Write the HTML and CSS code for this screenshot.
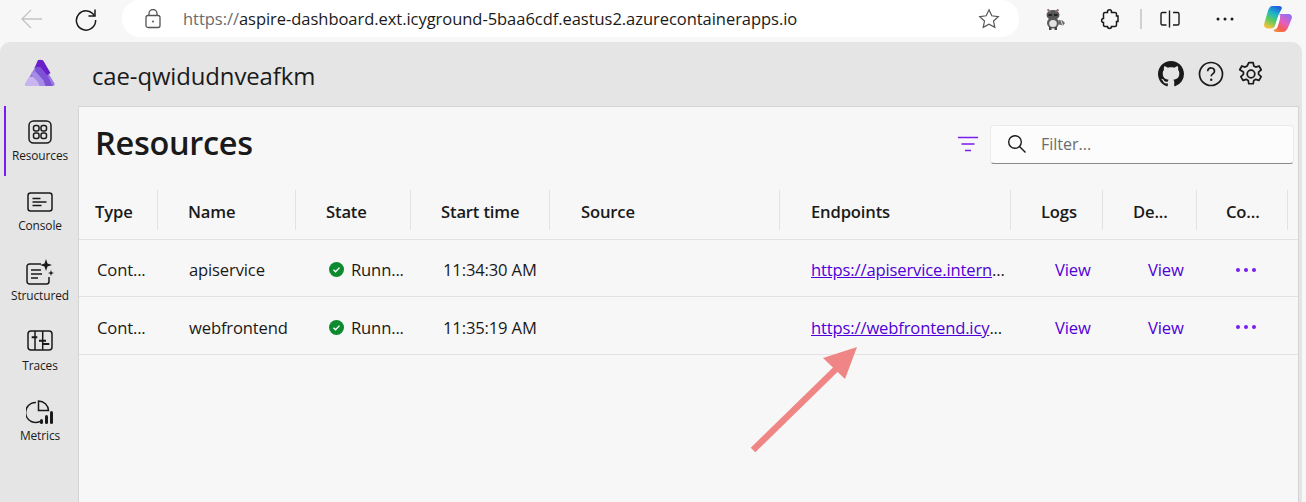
FILE: index.html
```html
<!DOCTYPE html>
<html lang="en">
<head>
<meta charset="utf-8">
<title>Resources</title>
<link rel="stylesheet" href="styles.css">
</head>
<body>
<div class="toolbar">
  <svg class="tb-back" width="24" height="24" viewBox="0 0 24 24" fill="none" stroke="#c4c4c4" stroke-width="1.4"><path d="M22 12H2M11 3l-9 9 9 9"/></svg>
  <svg class="tb-reload" width="24" height="24" viewBox="0 0 24 24" fill="none" stroke="#1a1a1a" stroke-width="1.5"><path d="M20.5 9A9.6 9.6 0 1 0 21.6 13"/><path d="M21 2.5V9h-6.5"/></svg>
  <div class="urlbar">
    <svg class="lock" width="16" height="20" viewBox="0 0 16 20" fill="none" stroke="#555" stroke-width="1.3"><rect x="1" y="6.5" width="14" height="12" rx="2"/><path d="M4 6.500V4.500a4 4 0 0 1 8 0v2"/><circle cx="8" cy="12.500" r="1" fill="#555" stroke="none"/></svg>
    <span class="url"><span class="url-scheme">https://</span>aspire-dashboard.ext.icyground-5baa6cdf.eastus2.azurecontainerapps.io</span>
    <svg class="star" width="22" height="22" viewBox="0 0 22 22" fill="none" stroke="#555" stroke-width="1.2"><path d="M11 1.800l2.800 6 6.500.8-4.800 4.400 1.300 6.400L11 16.200l-5.800 3.200 1.300-6.400L1.700 8.600l6.500-.8z"/></svg>
  </div>
  <svg class="ext-raccoon" width="22" height="24" viewBox="0 0 22 24"><ellipse cx="9" cy="8" rx="6.500" ry="5" fill="#555"/><path d="M3.500 2.500l3 2.500M14.500 2.500l-3 2.500" stroke="#8a6f6f" stroke-width="2"/><path d="M4.500 7h3.500v2H4.500zM10 7h3.500v2H10z" fill="#222"/><ellipse cx="9" cy="16" rx="6" ry="5.500" fill="#5a5a5a"/><ellipse cx="9" cy="16.500" rx="3.800" ry="3.600" fill="#e2e2e2"/><path d="M5 20h2.500v3H5zM10.500 20H13v3h-2.500z" fill="#444"/><path d="M14.500 13l4 .5 2.500 2.500-2 2.500-4 -1z" fill="#6a6a6a"/><path d="M17 13.500l1.500 4.500" stroke="#ddd"/></svg>
  <svg class="ext-puzzle" width="20" height="22" viewBox="0 0 20 22" fill="none" stroke="#1a1a1a" stroke-width="1.500"><path d="M7.500 3.500C7.500 1 11.500 1 11.500 3.500V4.500H15a1.500 1.500 0 0 1 1.500 1.500V8H18v5.500h-1.500V17a1.500 1.500 0 0 1-1.500 1.500h-3.500c0 2.500-4 2.500-4 0H5A1.500 1.500 0 0 1 3.500 17v-2.500C1 14.500 1 10.500 3.500 10.500V6A1.500 1.500 0 0 1 5 4.500h2.500z"/></svg>
  <span class="tb-sep"></span>
  <svg class="split" width="20" height="18" viewBox="0 0 20 18" fill="none" stroke="#1a1a1a" stroke-width="1.400"><path d="M6.500 2.500H2.500a1.500 1.500 0 0 0-1.500 1.500v9.500a1.500 1.500 0 0 0 1.500 1.500h4M13 2.500h4.500A1.500 1.500 0 0 1 19 4v9.500a1.500 1.500 0 0 1-1.500 1.500H13M9.500 0.500v17"/></svg>
  <svg class="more" width="18" height="4" viewBox="0 0 18 4" fill="#1a1a1a"><circle cx="2" cy="2" r="1.500"/><circle cx="9" cy="2" r="1.500"/><circle cx="16" cy="2" r="1.500"/></svg>
  <svg class="copilot" width="28" height="26" viewBox="0 0 28 26">
    <defs>
      <linearGradient id="cpA" x1="0.700" y1="0" x2="0.300" y2="1"><stop offset="0" stop-color="#1f5fe0"/><stop offset=".35" stop-color="#1fb6c8"/><stop offset=".65" stop-color="#5ccb5f"/><stop offset="1" stop-color="#f6c23c"/></linearGradient>
      <linearGradient id="cpB" x1="0.800" y1="0" x2="0.200" y2="1"><stop offset="0" stop-color="#8f6ff0"/><stop offset=".45" stop-color="#e45fc0"/><stop offset=".8" stop-color="#f4604f"/><stop offset="1" stop-color="#f68a3c"/></linearGradient>
    </defs>
    <path d="M8.500 0H15c1.800 0 2.800.8 3 2L14.500 9 11 19.500C10.300 21.500 9 22.500 7 22.500H4c-2.800 0-4.500-2-3.800-4.800L3.500 6.500C4.500 2.500 6 0 8.500 0z" fill="url(#cpA)"/>
    <path d="M15.500 8H24.500c2.600 0 4 2 3.200 4.500L24.500 20.500C23.300 24 21.500 26 18.500 26H12.500c-1.500 0-2.500-.8-3-2.200 2 0 3.500-1 4.200-3L16 13z" fill="url(#cpB)"/>
    <path d="M14.500 9.500h2L12.500 21c-.3 1-1 1.600-2 2z" fill="#fff"/>
  </svg>
</div>

<div class="window">
  <header class="appbar">
    <svg class="logo" width="30" height="28" viewBox="0 0 30 28">
      <path d="M15 0 L29.500 24.500a2 2 0 0 1-1.700 2.500H2.200a2 2 0 0 1-1.700-2.500z" fill="#9a7ce0"/>
      <path d="M13 1h4a2 2 0 0 1 1.500 1l7 12-4.500 3-7-8H9.500z" fill="#6a1fc9"/>
      <path d="M9.500 8h6l8 10 4 9H15z" fill="#7e52d6"/>
      <path d="M6.500 13.500h5l7 8 2 5.500H10.500z" fill="#a78ce6"/>
      <path d="M4 18h4l5 5 1.500 4H2.200a2 2 0 0 1-1.700-2.500z" fill="#c9b5f0"/>
    </svg>
    <span class="app-title">cae-qwidudnveafkm</span>
    <div class="appbar-actions">
      <svg width="26" height="26" viewBox="0 0 16 16" fill="#1a1a1a"><path d="M8 0C3.580 0 0 3.580 0 8c0 3.540 2.290 6.530 5.470 7.590.4.070.55-.17.550-.38 0-.19-.01-.82-.01-1.490-2.010.37-2.530-.49-2.690-.94-.09-.23-.48-.94-.82-1.130-.28-.15-.68-.52-.01-.53.630-.01 1.080.58 1.230.82.720 1.210 1.870.870 2.330.66.070-.52.280-.87.510-1.070-1.780-.2-3.640-.89-3.640-3.950 0-.87.310-1.590.820-2.150-.08-.2-.36-1.020.08-2.120 0 0 .67-.21 2.200.82.640-.18 1.320-.27 2-.27s1.360.09 2 .27c1.530-1.040 2.200-.82 2.200-.82.44 1.100.16 1.920.08 2.120.51.560.82 1.270.82 2.150 0 3.070-1.870 3.750-3.650 3.950.29.250.54.730.54 1.480 0 1.070-.01 1.930-.01 2.200 0 .21.150.46.550.38A8.010 8.010 0 0 0 16 8c0-4.420-3.580-8-8-8z"/></svg>
      <svg width="26" height="26" viewBox="0 0 26 26" fill="none" stroke="#1a1a1a" stroke-width="1.700"><circle cx="13" cy="13" r="11.500"/><path d="M9.700 10.200c0-4.400 6.800-4.200 6.800 0 0 2.700-3.300 2.600-3.300 5"/><circle cx="13.200" cy="18.700" r="1.200" fill="#1a1a1a" stroke="none"/></svg>
      <svg width="26" height="26" viewBox="0 0 24 24" fill="none" stroke="#1a1a1a" stroke-width="1.600"><circle cx="12" cy="12" r="3.500"/><path d="M10 1.500h4l.6 3.100 1.800 1 3-1 2 3.500-2.400 2.100v2.100l2.400 2.100-2 3.500-3-1-1.800 1-.6 3.100h-4l-.6-3.100-1.800-1-3 1-2-3.500 2.400-2.100v-2.100L1.600 8.100l2-3.500 3 1 1.800-1z" stroke-linejoin="round"/></svg>
    </div>
  </header>
  <div class="body">
    <nav class="sidebar">
      <a class="nav-item nav-active">
        <svg width="26" height="26" viewBox="0 0 26 26" fill="none" stroke="#1a1a1a" stroke-width="1.500"><rect x="2" y="2" width="22" height="22" rx="4.500"/><rect x="6.500" y="6.500" width="5.500" height="5.500" rx="2"/><rect x="14" y="6.500" width="5.500" height="5.500" rx="2"/><rect x="6.500" y="14" width="5.500" height="5.500" rx="2"/><rect x="14" y="14" width="5.500" height="5.500" rx="2"/></svg>
        <span>Resources</span>
      </a>
      <a class="nav-item">
        <svg width="26" height="26" viewBox="0 0 26 26" fill="none" stroke="#1a1a1a" stroke-width="1.500"><rect x="1" y="4" width="24" height="18" rx="2.500"/><path d="M5.500 9.500h8M5.500 13h14M5.500 16.500h9"/></svg>
        <span>Console</span>
      </a>
      <a class="nav-item">
        <svg width="28" height="26" viewBox="0 0 28 26" fill="none" stroke="#1a1a1a" stroke-width="1.500"><path d="M15 5H3.500A2.500 2.500 0 0 0 1 7.500V22.500A2.500 2.500 0 0 0 3.500 25h17a2.500 2.500 0 0 0 2.500-2.500V18"/><path d="M5 11h10M5 15h11M5 19h7"/><path d="M20 0l1.500 4.500L26 6l-4.500 1.500L20 12l-1.500-4.500L14 6l4.500-1.500z" fill="#1a1a1a" stroke="none"/><path d="M25 11l.8 2.200 2.200.8-2.200.8L25 17l-.8-2.200L22 14l2.200-.8z" fill="#1a1a1a" stroke="none"/></svg>
        <span>Structured</span>
      </a>
      <a class="nav-item">
        <svg width="26" height="26" viewBox="0 0 26 26" fill="none" stroke="#1a1a1a" stroke-width="1.500"><rect x="1" y="2" width="24" height="19" rx="3"/><path d="M8 2v19M15.700 2v19"/><path d="M4.700 8.300h5.600M12 11.700h7M15.700 15h6.600" stroke-width="1.900"/></svg>
        <span>Traces</span>
      </a>
      <a class="nav-item">
        <svg width="28" height="26" viewBox="0 0 28 26" fill="none" stroke="#1a1a1a" stroke-width="1.500"><path d="M10 3.500A10 10 0 1 0 14 22.500"/><path d="M12.500 2a10 10 0 0 1 10 9.500h-10z"/><rect x="14" y="20" width="3" height="5" rx="1.500" fill="#1a1a1a" stroke="none"/><rect x="19" y="16" width="3" height="9" rx="1.500" fill="#1a1a1a" stroke="none"/><rect x="24" y="12" width="3" height="13" rx="1.500" fill="#1a1a1a" stroke="none"/></svg>
        <span>Metrics</span>
      </a>
    </nav>
    <main class="main">
      <div class="page-head">
        <h1 class="page-title">Resources</h1>
        <svg class="filter-icon" width="20" height="16" viewBox="0 0 20 16" fill="none" stroke="#7a1cf0" stroke-width="1.500"><path d="M0 1.500h20M3.500 8h13M7 14.500h6"/></svg>
        <div class="search">
          <svg width="20" height="20" viewBox="0 0 20 20" fill="none" stroke="#1a1a1a" stroke-width="1.400"><circle cx="8" cy="8" r="6.300"/><path d="M12.500 12.500l6 6"/></svg>
          <span class="search-ph">Filter...</span>
        </div>
      </div>
      <div class="table">
        <div class="tr tr-head">
          <div class="th c1">Type</div><div class="th c2">Name</div><div class="th c3">State</div><div class="th c4">Start time</div><div class="th c5">Source</div><div class="th c6">Endpoints</div><div class="th c7">Logs</div><div class="th c8">De...</div><div class="th c9">Co...</div>
        </div>
        <div class="tr tr-a">
          <div class="td td1">Cont...</div><div class="td td2">apiservice</div>
          <div class="td td3"><svg width="15" height="15" viewBox="0 0 16 16"><circle cx="8" cy="8" r="8" fill="#0e8a2e"/><path d="M4.800 8.200l2.200 2.200 4.200-4.400" fill="none" stroke="#fff" stroke-width="1.500"/></svg><span class="clip">Runn...</span></div>
          <div class="td td4">11:34:30 AM</div><div class="td"></div>
          <div class="td td6"><a class="link">https://apiservice.intern</a>...</div>
          <div class="td td7"><a class="view">View</a></div><div class="td td8"><a class="view">View</a></div>
          <div class="td td9"><svg width="20" height="4" viewBox="0 0 20 4" fill="#7a1cf0"><circle cx="2" cy="2" r="2"/><circle cx="10" cy="2" r="2"/><circle cx="18" cy="2" r="2"/></svg></div>
        </div>
        <div class="tr tr-b">
          <div class="td td1">Cont...</div><div class="td td2">webfrontend</div>
          <div class="td td3"><svg width="15" height="15" viewBox="0 0 16 16"><circle cx="8" cy="8" r="8" fill="#0e8a2e"/><path d="M4.800 8.200l2.200 2.200 4.200-4.400" fill="none" stroke="#fff" stroke-width="1.500"/></svg><span class="clip">Runn...</span></div>
          <div class="td td4">11:35:19 AM</div><div class="td"></div>
          <div class="td td6"><a class="link">https://webfrontend.icy</a>...</div>
          <div class="td td7"><a class="view">View</a></div><div class="td td8"><a class="view">View</a></div>
          <div class="td td9"><svg width="20" height="4" viewBox="0 0 20 4" fill="#7a1cf0"><circle cx="2" cy="2" r="2"/><circle cx="10" cy="2" r="2"/><circle cx="18" cy="2" r="2"/></svg></div>
        </div>
      </div>
    </main>
  </div>
</div>
<svg class="arrow" width="120" height="115" viewBox="0 0 120 115"><path d="M3 105L86 24" stroke="#f08585" stroke-width="6.500"/><path d="M107 2L73 13 95 34z" fill="#f08585"/></svg>
</body>
</html>
```

FILE: styles.css
```css
* { box-sizing: border-box; }
html, body { margin: 0; padding: 0; }
body {
  width: 1306px;
  height: 502px;
  overflow: hidden;
  background: #f7f7f7;
  color: #1a1a1a;
  font-family: "Open Sans", "Noto Sans", sans-serif;
  position: relative;
}
.toolbar {
  height: 42px;
  display: flex;
  align-items: flex-start;
  background: #f7f7f7;
}
.tb-back { margin: 7px 0 0 20px; }
.tb-reload { margin: 7px 0 0 30px; }
.urlbar {
  margin-left: 24px;
  width: 897px;
  height: 37px;
  background: #fff;
  border-radius: 18px;
  display: flex;
  align-items: center;
  padding-left: 23px;
}
.url {
  margin-left: 22px;
  font-size: 16.500px;
  letter-spacing: -0.040px;
  color: #1a1a1a;
  white-space: nowrap;
}
.url-scheme { color: #6b6b6b; }
.star { margin-left: auto; margin-right: 19px; }
.ext-raccoon { margin: 7px 0 0 25px; }
.ext-puzzle { margin: 8px 0 0 34px; }
.tb-sep { width: 2px; height: 20px; background: #d0d0d0; margin: 9px 0 0 20px; }
.split { margin: 10px 0 0 18px; }
.more { margin: 17px 0 0 36px; }
.copilot { margin: 6px 0 0 30px; }

.window {
  width: 1302px;
  height: 460px;
  background: #e5e5e5;
  border-radius: 10px 10px 0 0;
  display: flex;
  flex-direction: column;
}
.appbar {
  height: 64px;
  display: flex;
  align-items: center;
  padding-left: 25px;
  padding-right: 38px;
  flex: none;
}
.logo { margin-top: -2px; }
.app-title {
  margin-left: 37px;
  margin-top: 3px;
  font-size: 23.900px;
  letter-spacing: -0.100px;
  white-space: nowrap;
}
.appbar-actions {
  margin-left: auto;
  display: flex;
  gap: 14px;
  align-items: center;
}
.body { flex: 1; display: flex; min-height: 0; }
.sidebar {
  width: 79px;
  flex: none;
  border-right: 1px solid #d4d4d4;
  display: flex;
  flex-direction: column;
}
.nav-item {
  height: 70px;
  display: flex;
  flex-direction: column;
  align-items: center;
  padding-top: 13px;
  padding-right: 4px;
  gap: 2px;
  font-size: 11.900px;
  letter-spacing: -0.100px;
  margin-left: 4px;
  border-left: 2px solid transparent;
}
.nav-active { border-left-color: #7a1cf0; }
.main {
  flex: 1;
  background: #f7f7f7;
  border-top: 1px solid #d4d4d4;
  border-right: 1px solid #d4d4d4;
  display: flex;
  flex-direction: column;
  margin-right: 3px;
}
.page-head {
  height: 74px;
  display: flex;
  align-items: center;
  padding-left: 16px;
}
.page-title {
  margin: 0;
  font-size: 32.500px;
  font-weight: 600;
  letter-spacing: -0.300px;
  line-height: 1;
  margin-top: -1px;
}
.filter-icon { margin-left: auto; margin-right: 12px; }
.search {
  width: 304px;
  height: 39px;
  margin-right: 4px;
  background: #fcfcfc;
  border: 1px solid #ebebeb;
  border-bottom: 1px solid #8a8a8a;
  border-radius: 4px;
  display: flex;
  align-items: center;
  padding-left: 16px;
  gap: 14px;
}
.search-ph { font-size: 16px; color: #6b6b6b; }
.table { display: flex; flex-direction: column; }
.tr {
  display: grid;
  grid-template-columns: 79px 138px 115px 139px 230px 231px 92px 94px 91px;
  border-bottom: 1px solid #e3e3e3;
  align-items: center;
  font-size: 16.600px;
  letter-spacing: -0.150px;
}
.tr-head { height: 59px; align-items: start; }
.tr-a { height: 57px; }
.tr-b { height: 58px; }
.th {
  font-weight: 600;
  height: 40px;
  margin-top: 9px;
  padding-top: 2px;
  display: flex;
  align-items: center;
  border-right: 1px solid #e3e3e3;
  padding-left: 30px;
}
.th.c1 { padding-left: 16px; }
.th.c5, .th.c6 { padding-left: 31px; }
.th.c9 { padding-left: 29px; }
.td { white-space: nowrap; overflow: hidden; padding-top: 3px; }
.td1 { padding-left: 18px; }
.td2 { padding-left: 31px; }
.td3 { padding-left: 33px; display: flex; align-items: center; gap: 7px; }
.td4 { padding-left: 32px; }
.td6 { padding-left: 31px; }
.td7 { padding-left: 44px; }
.td8 { padding-left: 45px; }
.td9 { padding-left: 39px; display: flex; align-items: center; }
.link { color: #5000d8; text-decoration: underline; }
.view { color: #5000d8; }
.arrow {
  position: absolute;
  left: 750px;
  top: 345px;
}
```
